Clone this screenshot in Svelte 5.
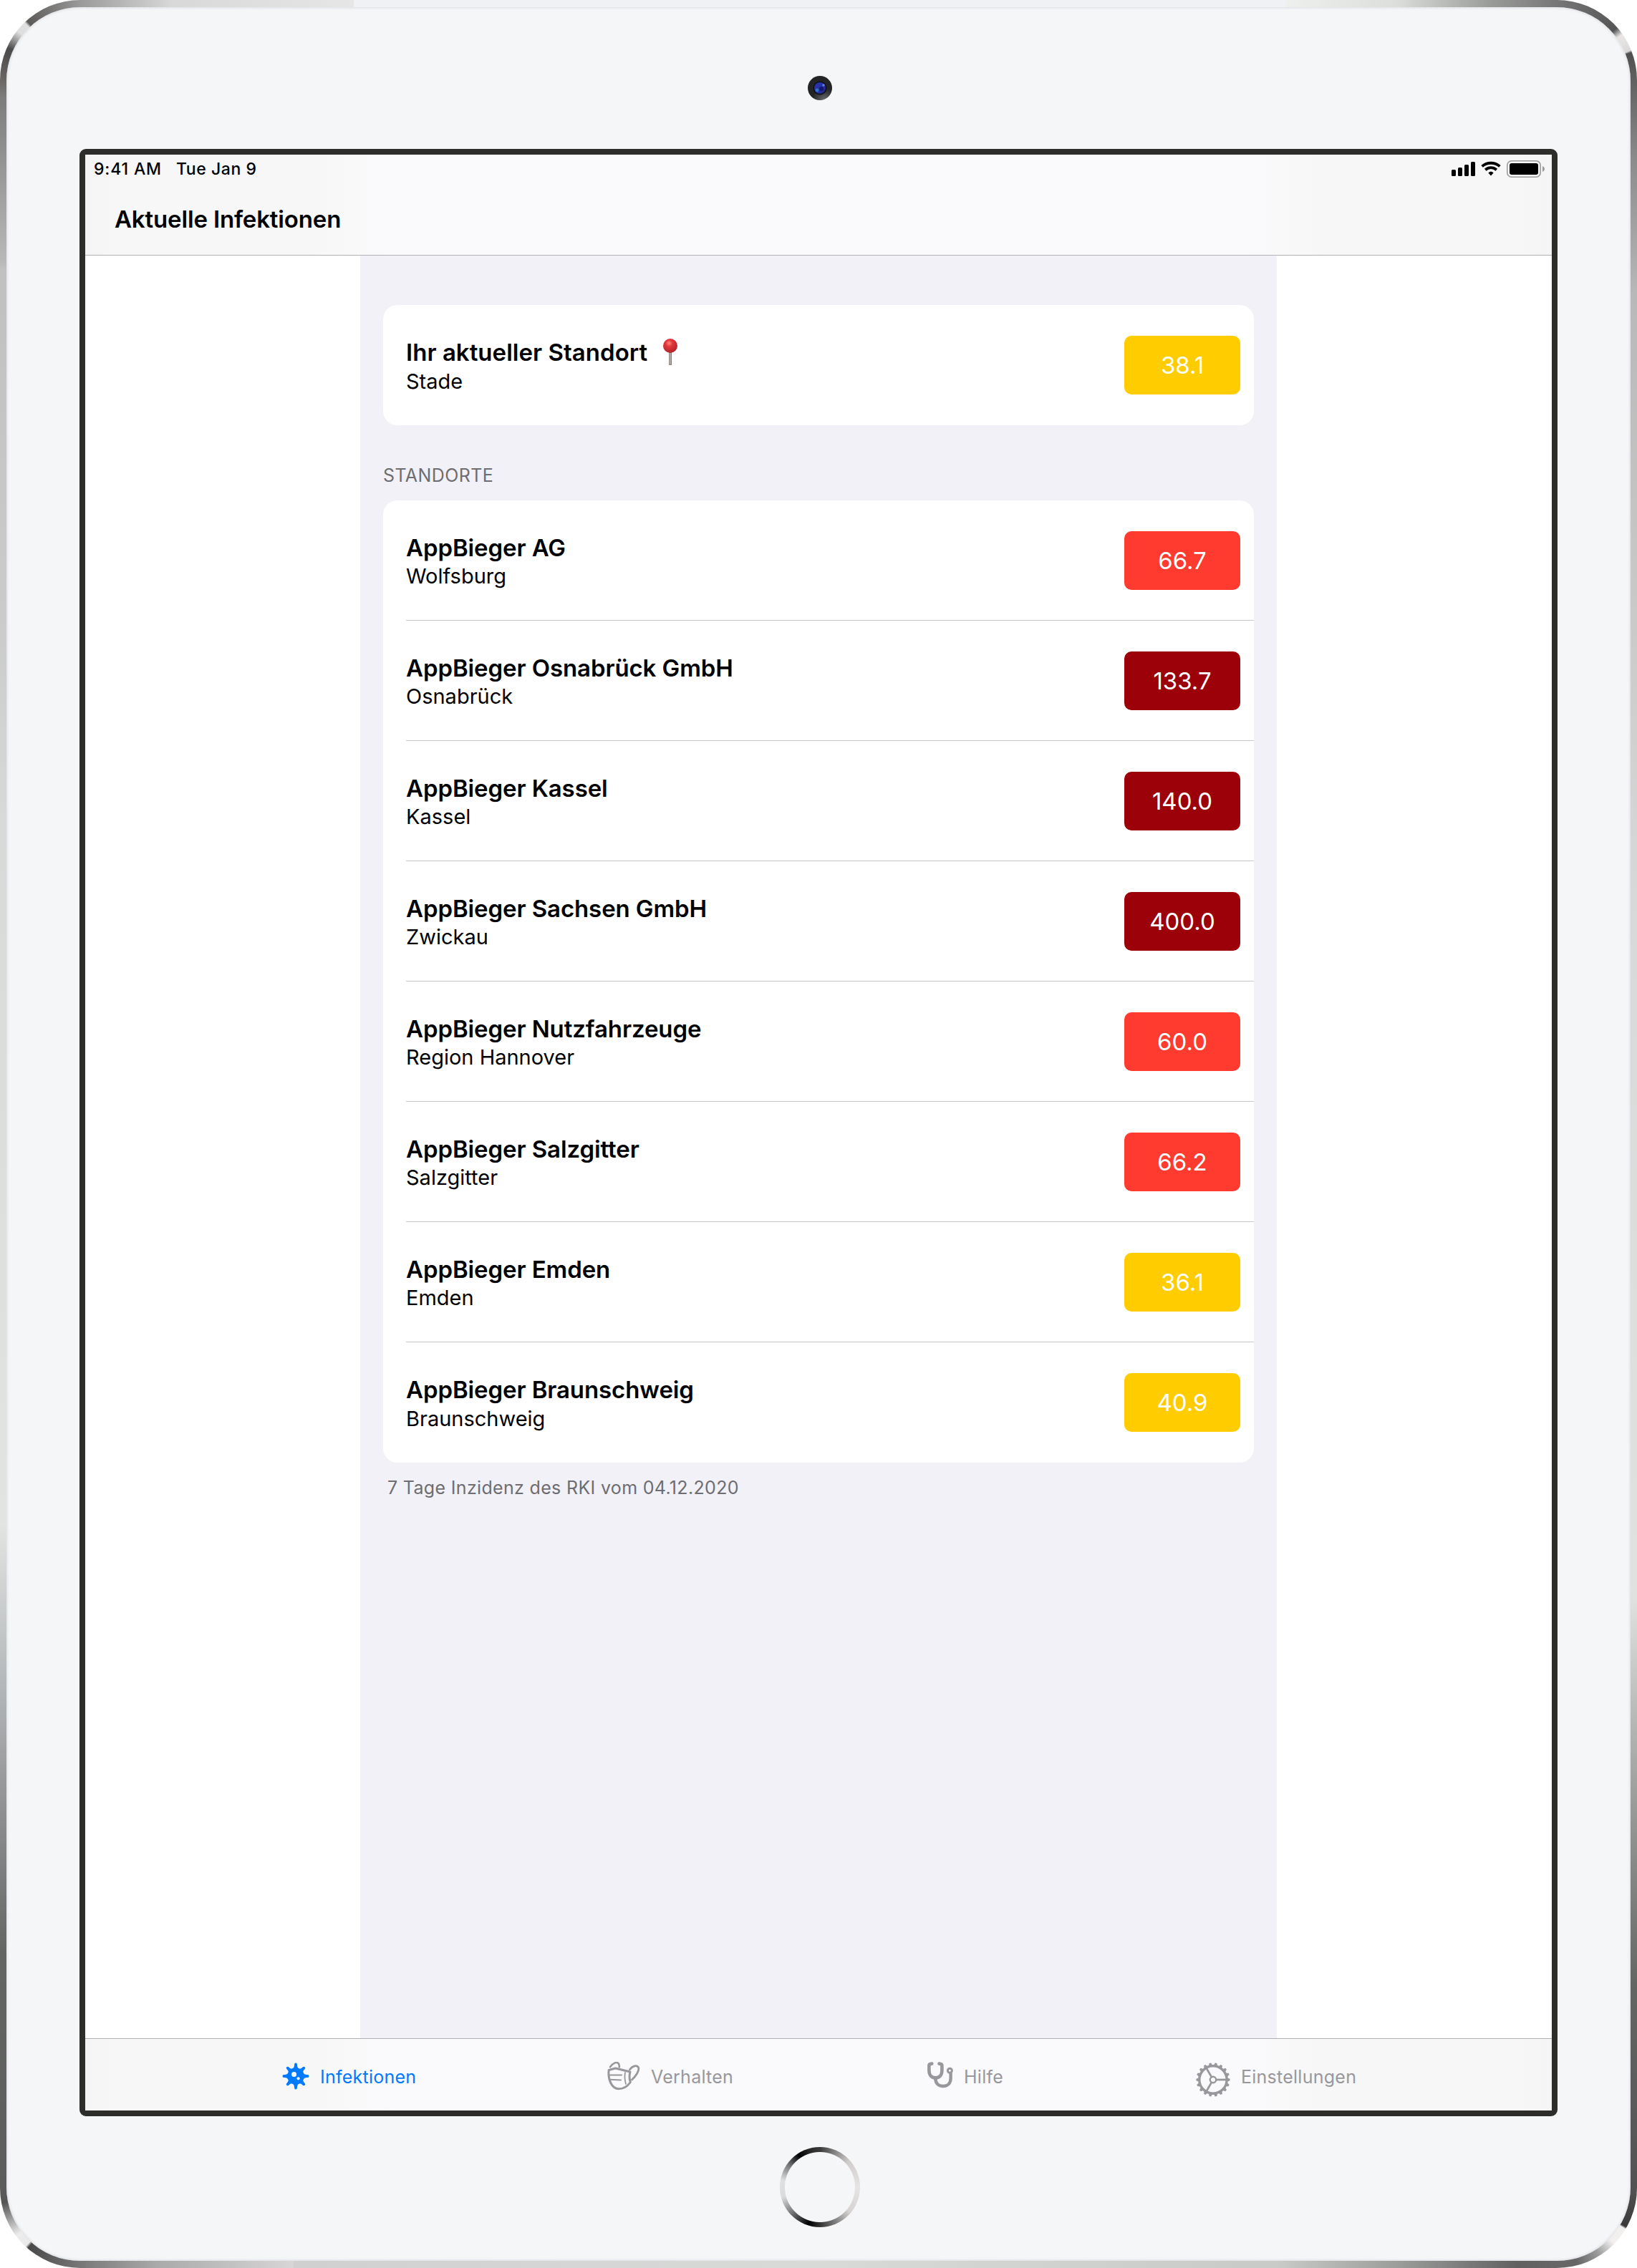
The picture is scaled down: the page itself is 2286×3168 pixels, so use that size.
<script>
  const sites = [
    { name: 'AppBieger AG', city: 'Wolfsburg', value: '66.7', level: 'red' },
    { name: 'AppBieger Osnabrück GmbH', city: 'Osnabrück', value: '133.7', level: 'dark' },
    { name: 'AppBieger Kassel', city: 'Kassel', value: '140.0', level: 'dark' },
    { name: 'AppBieger Sachsen GmbH', city: 'Zwickau', value: '400.0', level: 'dark' },
    { name: 'AppBieger Nutzfahrzeuge', city: 'Region Hannover', value: '60.0', level: 'red' },
    { name: 'AppBieger Salzgitter', city: 'Salzgitter', value: '66.2', level: 'red' },
    { name: 'AppBieger Emden', city: 'Emden', value: '36.1', level: 'yellow' },
    { name: 'AppBieger Braunschweig', city: 'Braunschweig', value: '40.9', level: 'yellow' }
  ];

  const toothAngles = Array.from({ length: 18 }, (_, i) => i * 20);
  const diagonals = [45, 135, 225, 315];
  const cardinals = [0, 90, 180, 270];
</script>

<div class="device">
  <div class="bezel">
    <div class="forehead">
      <svg class="camera" width="34" height="34" viewBox="0 0 34 34">
        <defs>
          <radialGradient id="housing" cx="0.68" cy="1" r="0.5">
            <stop offset="0" stop-color="#6a6a6c" />
            <stop offset="1" stop-color="#222426" />
          </radialGradient>
          <linearGradient id="lens" x1="0" y1="0" x2="1" y2="1">
            <stop offset="0" stop-color="#2a33a8" />
            <stop offset="0.6" stop-color="#2530a8" />
            <stop offset="1" stop-color="#1d2470" />
          </linearGradient>
        </defs>
        <circle cx="17" cy="17" r="17" fill="url(#housing)" />
        <circle cx="17" cy="17" r="9.5" fill="#0e0f16" />
        <circle cx="17" cy="17" r="8" fill="url(#lens)" />
        <circle cx="19" cy="18" r="3" fill="#14186a" />
        <circle cx="13" cy="20" r="2.4" fill="#3474cc" />
        <circle cx="22" cy="13" r="1.7" fill="#5f86dc" />
      </svg>
    </div>

    <div class="screen">
      <header>
        <div class="status">
          <span class="time">9:41 AM</span>
          <span class="date">Tue Jan 9</span>
          <svg class="indicators" width="132" height="26" viewBox="0 0 132 26">
            <rect x="0" y="13" width="6" height="9" rx="1.5" />
            <rect x="9" y="10" width="6" height="12" rx="1.5" />
            <rect x="18" y="6" width="6" height="16" rx="1.5" />
            <rect x="27" y="2" width="6" height="20" rx="1.5" />
            <path d="M42.6 8.4 C49.5 2.2 60.5 2.2 67.4 8.4" fill="none" stroke="#000" stroke-width="3.8" />
            <path d="M47.2 13.2 C51.8 9.2 58.2 9.2 62.8 13.2" fill="none" stroke="#000" stroke-width="3.8" />
            <path d="M51.4 17.6 C53.6 15.2 56.4 15.2 58.6 17.6 L55 21.6 Z" />
            <rect x="77.8" y="0.8" width="46.4" height="22.4" rx="6" fill="none" stroke="#9b9b9b" stroke-width="1.6" />
            <rect x="81" y="4" width="40" height="16" rx="3" />
            <path d="M127 8 C131 9.5 131 14.5 127 16 Z" fill="#9b9b9b" />
          </svg>
        </div>
        <h1>Aktuelle Infektionen</h1>
      </header>

      <main>
        <div class="column">
          <section class="card">
            <div class="row">
              <div class="label">
                <h2>
                  Ihr aktueller Standort
                  <svg class="pin" width="20" height="38" viewBox="0 0 20 38">
                    <defs>
                      <radialGradient id="pinhead" cx="0.42" cy="0.32" r="0.65">
                        <stop offset="0" stop-color="#ff8a80" />
                        <stop offset="0.35" stop-color="#e5383b" />
                        <stop offset="1" stop-color="#b3262b" />
                      </radialGradient>
                    </defs>
                    <rect x="8.2" y="18" width="3.8" height="19" rx="0.8" fill="#857a74" />
                    <rect x="9.4" y="20" width="1.2" height="16" fill="#cfc8c2" />
                    <circle cx="10" cy="10" r="10" fill="url(#pinhead)" />
                  </svg>
                </h2>
                <p>Stade</p>
              </div>
              <span class="badge yellow">38.1</span>
            </div>
          </section>

          <h3>STANDORTE</h3>

          <section class="card">
            {#each sites as site}
              <div class="row">
                <div class="label">
                  <h2>{site.name}</h2>
                  <p>{site.city}</p>
                </div>
                <span class="badge {site.level}">{site.value}</span>
              </div>
            {/each}
          </section>

          <p class="note">7 Tage Inzidenz des RKI vom 04.12.2020</p>
        </div>
      </main>

      <nav>
        <div class="tab active">
          <svg class="virus" width="38" height="38" viewBox="-19 -19 38 38">
            <circle r="11.6" fill="currentColor" />
            {#each cardinals as a}
              <path transform="rotate({a})" d="M-6.5 -9.5 C-3 -11 -2 -12.5 -1.9 -16.6 A1.9 1.9 0 0 1 1.9 -16.6 C2 -12.5 3 -11 6.5 -9.5 Z" fill="currentColor" />
            {/each}
            {#each diagonals as a}
              <path transform="rotate({a})" d="M-5.5 -9.5 C-2.6 -11 -2 -12.5 -1.9 -16 A1.9 1.9 0 0 1 1.9 -16 C2 -12.5 2.6 -11 5.5 -9.5 Z" fill="currentColor" />
            {/each}
            <circle cx="-2.4" cy="-2.6" r="3.5" fill="#f8f8f9" />
            <circle cx="3.6" cy="3.3" r="2.1" fill="#f8f8f9" />
          </svg>
          <span>Infektionen</span>
        </div>
        <div class="tab">
          <svg class="mask" width="46" height="40" viewBox="0 0 46 40" fill="none" stroke="currentColor" stroke-linecap="round" stroke-linejoin="round">
            <path d="M2.2 11.5 L11.5 9 L32 14 C30.6 19 30.8 24 32.3 28.5 C28 34.5 22 37.8 16 37.8 C6.5 37.8 0.6 25 2.2 11.5 Z" stroke-width="3" />
            <path d="M25 15 C24 20.5 24.4 25.5 26 31" stroke-width="1.8" />
            <path d="M4 7.2 C8 1.4 13 -0.2 15.4 2 C16.6 3.2 17 5 16.8 7.4" stroke-width="2.6" />
            <path d="M31.5 10.8 C35.5 5 41.5 4.2 43.6 8 C45 12.5 40 20 34.5 25" stroke-width="2.8" />
            <path d="M4 18.6 H20 M4 24.8 L19 25.4" stroke-width="2" />
          </svg>
          <span>Verhalten</span>
        </div>
        <div class="tab">
          <svg class="stethoscope" width="36" height="37" viewBox="0 0 36 37" fill="none" stroke="currentColor" stroke-linecap="round">
            <path d="M6.3 2.6 L4.2 2.9 Q2.4 3.2 2.4 5 V12 C2.4 18.5 6 22.4 11.4 22.4 C16.8 22.4 20.4 18.5 20.4 12 V5 Q20.4 3.2 18.6 2.9 L16.5 2.6" stroke-width="4.6" />
            <path d="M11.2 23.5 C11.6 30 15.5 34 22 34 C28.6 34 32.6 29.6 32.6 23 V16" stroke-width="4.4" />
            <circle cx="31.4" cy="12.2" r="3" stroke-width="3" />
          </svg>
          <span>Hilfe</span>
        </div>
        <div class="tab">
          <svg class="gear" width="48" height="48" viewBox="-24 -24 48 48" fill="none" stroke="currentColor">
            <circle r="19.2" stroke-width="3.4" />
            {#each toothAngles as a}
              <path transform="rotate({a})" d="M19.5 -2.8 L23.6 -1.3 V1.3 L19.5 2.8 Z" fill="currentColor" stroke="none" />
            {/each}
            <circle r="4.2" stroke-width="2.4" />
            {#each [0, 120, 240] as a}
              <path transform="rotate({a})" d="M5 0 H19" stroke-width="2.8" />
            {/each}
          </svg>
          <span>Einstellungen</span>
        </div>
      </nav>
    </div>

    <div class="chin">
      <div class="home"></div>
    </div>
  </div>
</div>

<style>
  :global(body) {
    background: #fff;
  }

  .device {
    box-sizing: border-box;
    width: 2286px;
    height: 3168px;
    padding: 10px 9px;
    border-radius: 112px;
    background:
      conic-gradient(from 270deg at 100% 100%, #6a6664 0deg, #4a4a4a 24deg, #b4b4b4 34deg, #dedede 38deg, #e0e0e0 46deg, #5c5a59 48deg, #9a9a9a 90deg) 0 0 / 112px 112px no-repeat,
      conic-gradient(from 0deg at 0% 100%, #777 0deg, #555 49deg, #eae6e6 55deg, #dcdad9 68deg, #505050 69.5deg, #606060 90deg) 100% 0 / 112px 112px no-repeat,
      conic-gradient(from 90deg at 0% 0%, #525252 0deg, #3a3a3a 29.5deg, #f2f0ef 31deg, #f2f0ef 44deg, #999 58deg, #666 75deg, #666 90deg) 100% 100% / 112px 112px no-repeat,
      conic-gradient(from 180deg at 100% 0%, #777 0deg, #484848 41deg, #eaeaea 43deg, #eeecec 53deg, #999 67deg, #555 79deg, #5c5c5c 90deg) 0 100% / 112px 112px no-repeat,
      linear-gradient(90deg, #9a9a9a 112px, #d8d8d8 240px, #e6e6e6 494px, #f0f1f4 494px, #f0f1f4 1796px, #eef0ee 1796px, #dcdedc 1950px, #9a9c9a 2080px, #777 2174px) 0 0 / 100% 10px no-repeat,
      linear-gradient(90deg, #777 112px, #aaa 220px, #d8d6d6 410px, #d0d0d0 410px, #d8dad8 1145px, #c8cac8 1786px, #9c9e9c 1950px, #606060 2120px, #666 2174px) 0 100% / 100% 10px no-repeat,
      linear-gradient(180deg, #6a6664 112px, #7c7c7c 135px, #b8b8b8 365px, #c0c0c0 375px, #cbcccb 900px, #d8dad9 1150px, #dcdedc 1600px, #e2e4e2 2130px, #b5b8ba 2350px, #88898b 2560px, #636563 2730px, #5c5c5c 3056px) 0 0 / 9px 100% no-repeat,
      linear-gradient(180deg, #606060 112px, #8a8a8a 220px, #b8b8b8 410px, #cfcfce 1000px, #d8dad9 1300px, #e0e2e0 2230px, #999b99 2520px, #646664 2770px, #525252 3056px) 100% 0 / 9px 100% no-repeat;
    font-family: Inter, 'Liberation Sans', sans-serif;
    color: #000;
  }

  .bezel {
    display: flex;
    flex-direction: column;
    align-items: center;
    height: 3148px;
    border-radius: 103px;
    background: #f4f6f8;
    box-shadow: inset 0 0 4px #cfd0d4;
  }

  .forehead {
    display: flex;
    justify-content: center;
    box-sizing: border-box;
    width: 100%;
    height: 198px;
    padding: 96px 0 0 4px;
  }

  .screen {
    display: flex;
    flex-direction: column;
    box-sizing: border-box;
    width: 2064px;
    height: 2748px;
    border: 8px solid #2d2d2b;
    border-radius: 9px;
    background: #fff;
  }

  header,
  nav {
    background: linear-gradient(90deg, #f5f5f5, #f7f7f7 60px, #f7f7f7 310px, #fafafc 430px, #fafafc 1615px, #f7f7f7 1735px, #f7f7f7 1980px, #f5f5f5);
  }

  header {
    box-sizing: border-box;
    height: 141px;
    border-bottom: 1px solid #b2b2b4;
  }

  .status {
    display: flex;
    height: 64px;
    padding: 6px 10px 0 12px;
    font-size: 23px;
    font-weight: 500;
    line-height: 28px;
  }

  .time {
    width: 115px;
    letter-spacing: 0.85px;
  }

  .date {
    letter-spacing: 0.55px;
  }

  .indicators {
    margin: 2px -2px 0 auto;
  }

  h1 {
    margin: 0;
    padding-left: 41px;
    font-size: 33px;
    font-weight: 600;
    line-height: 40px;
    letter-spacing: -0.15px;
  }

  main {
    display: flex;
    flex: 1;
    justify-content: center;
  }

  .column {
    box-sizing: border-box;
    width: 1280px;
    padding: 69px 32px 0;
    background: #f2f1f7;
  }

  .card {
    overflow: hidden;
    border-radius: 20px;
    background: #fff;
  }

  .row {
    display: flex;
    align-items: center;
    justify-content: space-between;
    box-sizing: border-box;
    height: 168px;
    margin-left: 32px;
    padding-right: 19px;
  }

  .row:not(:last-child) {
    border-bottom: 1px solid #c6c6c8;
  }

  .label {
    height: 76px;
  }

  h2 {
    display: flex;
    gap: 22px;
    margin: 0;
    font-size: 33px;
    font-weight: 600;
    line-height: 40px;
    letter-spacing: -0.1px;
  }

  .card:first-child h2 {
    letter-spacing: 0.03px;
  }

  .pin {
    margin: 1px 0 -1px;
  }

  .row p {
    margin: 2.5px 0 0;
    font-size: 29px;
    line-height: 36px;
  }

  .badge {
    width: 162px;
    border-radius: 10px;
    color: #fff;
    font-size: 33px;
    line-height: 82px;
    text-align: center;
  }

  .yellow {
    background: #ffcc00;
  }

  .red {
    background: #ff3b30;
  }

  .dark {
    background: #9c0009;
  }

  h3,
  .note {
    margin: 0;
    color: #6d6d72;
    font-size: 25px;
    font-weight: 400;
    line-height: 30px;
    letter-spacing: 0.4px;
  }

  h3 {
    padding: 55px 0 20px;
  }

  .note {
    padding: 20px 0 0 6px;
    letter-spacing: 0.33px;
  }

  nav {
    display: grid;
    grid-template-columns: 454px 447px 375px auto;
    align-items: center;
    box-sizing: border-box;
    height: 101px;
    padding: 6px 0 0 275px;
    border-top: 1px solid #b0b0b3;
  }

  .tab {
    display: flex;
    align-items: center;
    gap: 15px;
    height: 48px;
    color: #98989c;
    font-size: 25px;
    line-height: 30px;
    letter-spacing: 0.25px;
  }

  .active {
    color: #007aff;
  }

  .virus,
  .mask {
    margin-bottom: 3px;
  }

  .stethoscope {
    overflow: visible;
    margin-bottom: 5px;
  }

  .gear {
    position: relative;
    top: 3.5px;
  }

  .chin {
    display: flex;
    justify-content: center;
    box-sizing: border-box;
    width: 100%;
    padding: 43px 0 0 4px;
  }

  .home {
    width: 112px;
    height: 112px;
    border-radius: 50%;
    background:
      radial-gradient(circle, #f4f6f8 48.5px, transparent 49.5px),
      conic-gradient(#3a3a3a 0deg, #8a8888 25deg, #d0cccb 48deg, #e8e4e5 90deg, #d6d2d2 130deg, #777 158deg, #333 180deg, #000 197deg, #777 228deg, #dcdcdc 255deg, #e0e0e0 280deg, #777 305deg, #000 327deg, #2a2a2a 345deg, #3a3a3a 360deg);
  }
</style>
